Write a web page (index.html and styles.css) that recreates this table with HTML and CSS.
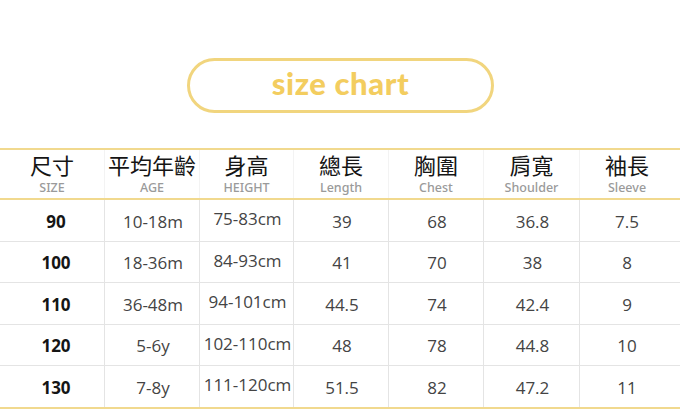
FILE: index.html
```html
<!DOCTYPE html>
<html lang="zh-Hant">
<head>
<meta charset="utf-8">
<link rel="stylesheet" href="styles.css">
</head>
<body>
<div class="title-wrap"><div class="pill">size chart</div></div>
<div class="chart">
  <div class="head">
    <div class="hc"><span class="zh">尺寸</span><span class="en">SIZE</span></div>
    <div class="hc"><span class="zh">平均年齡</span><span class="en">AGE</span></div>
    <div class="hc"><span class="zh">身高</span><span class="en">HEIGHT</span></div>
    <div class="hc"><span class="zh">總長</span><span class="en">Length</span></div>
    <div class="hc"><span class="zh">胸圍</span><span class="en">Chest</span></div>
    <div class="hc"><span class="zh">肩寬</span><span class="en">Shoulder</span></div>
    <div class="hc last"><span class="zh">袖長</span><span class="en">Sleeve</span></div>
  </div>
  <div class="body">
    <div class="row">
      <div class="c size">90</div><div class="c">10-18m</div><div class="c ht">75-83cm</div><div class="c">39</div><div class="c">68</div><div class="c">36.8</div><div class="c last">7.5</div>
    </div>
    <div class="row">
      <div class="c size">100</div><div class="c">18-36m</div><div class="c ht">84-93cm</div><div class="c">41</div><div class="c">70</div><div class="c">38</div><div class="c last">8</div>
    </div>
    <div class="row">
      <div class="c size">110</div><div class="c">36-48m</div><div class="c ht">94-101cm</div><div class="c">44.5</div><div class="c">74</div><div class="c">42.4</div><div class="c last">9</div>
    </div>
    <div class="row">
      <div class="c size">120</div><div class="c">5-6y</div><div class="c ht">102-110cm</div><div class="c">48</div><div class="c">78</div><div class="c">44.8</div><div class="c last">10</div>
    </div>
    <div class="row">
      <div class="c size">130</div><div class="c">7-8y</div><div class="c ht">111-120cm</div><div class="c">51.5</div><div class="c">82</div><div class="c">47.2</div><div class="c last">11</div>
    </div>
  </div>
</div>
</body>
</html>
```
FILE: styles.css
```css
html, body {
  margin: 0;
  padding: 0;
  background: #ffffff;
}
body {
  width: 680px;
  height: 415px;
  overflow: hidden;
  font-family: "Open Sans", "Noto Sans CJK TC", sans-serif;
}
.title-wrap {
  display: flex;
  justify-content: center;
  padding-top: 58px;
  padding-left: 1px;
}
.pill {
  box-sizing: border-box;
  width: 307px;
  height: 55px;
  border: 3px solid #f1d57e;
  border-radius: 28px;
  display: flex;
  align-items: center;
  justify-content: center;
  color: #f3cd5f;
  font-family: "Lato", sans-serif;
  font-weight: 900;
  font-size: 31px;
  letter-spacing: 0.6px;
  padding-bottom: 5px;
}
.chart {
  margin-top: 35px;
  border-top: 2px solid #f1d98e;
  border-bottom: 2px solid #f1d98e;
}
.head, .row {
  display: grid;
  grid-template-columns: 105px 95px 94px 95px 95px 96px 100px;
}
.head {
  box-sizing: border-box;
  height: 50px;
  border-bottom: 2px solid #f1d98e;
}
.hc {
  display: flex;
  flex-direction: column;
  align-items: center;
  border-right: 1px solid #f3f3f3;
  padding-top: 2px;
}
.hc.last { border-right: none; padding-right: 6px; }
.zh {
  font-family: "Noto Sans CJK TC", sans-serif;
  font-size: 22px;
  line-height: 25px;
  color: #151515;
}
.en {
  font-family: "Noto Sans", sans-serif;
  font-size: 12.5px;
  line-height: 16px;
  color: #9a9a9a;
  font-weight: 500;
  margin-top: 3px;
}
.row {
  height: 41.5px;
  box-sizing: border-box;
  border-bottom: 1px solid #e4e4e4;
}
.row:last-child { border-bottom: none; height: 40.5px; }
.c {
  display: flex;
  align-items: center;
  justify-content: center;
  border-right: 1px solid #e4e4e4;
  font-size: 17px;
  color: #444444;
  padding-left: 2px;
  padding-top: 2px;
}
.c.last { border-right: none; padding-right: 8px; }
.c.size {
  font-weight: 700;
  color: #151515;
  padding-left: 8px;
}
.c.ht {
  padding-top: 0;
  padding-bottom: 3px;
}
```
